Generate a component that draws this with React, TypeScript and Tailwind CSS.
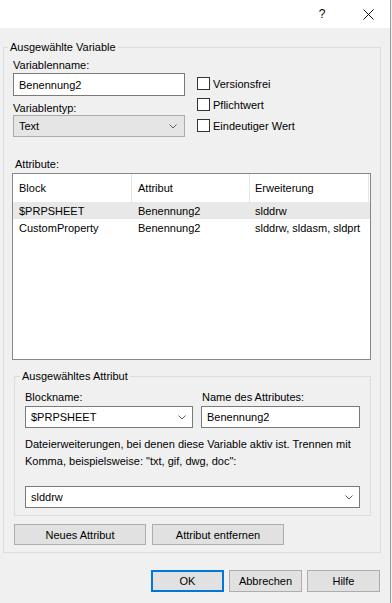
const font = { fontFamily: '"Liberation Sans", Arial, sans-serif' };

const Chevron = () => (
  <svg width="8" height="5" viewBox="0 0 8 5" className="shrink-0">
    <polyline points="0.5,0.5 4,4 7.5,0.5" fill="none" stroke="#606060" strokeWidth="1" />
  </svg>
);

const Checkbox = ({ label }: { label: string }) => (
  <div className="flex h-[21px] items-center gap-[3px]">
    <div className="h-[13px] w-[13px] border border-[#333333] bg-white" />
    <span>{label}</span>
  </div>
);

const rows = [
  { block: "$PRPSHEET", attr: "Benennung2", ext: "slddrw", selected: true },
  { block: "CustomProperty", attr: "Benennung2", ext: "slddrw, sldasm, sldprt", selected: false },
];

export default function App() {
  return (
    <div className="flex h-[603px] w-[392px] bg-[#f0f0f0] text-[11px] leading-[14px] text-black" style={font}>
      <div className="flex w-[390px] flex-col">
        {/* title bar */}
        <div className="flex h-[28px] items-center justify-end bg-white">
          <div className="flex w-[50px] justify-center text-[12px]">?</div>
          <div className="flex w-[43px] justify-center">
            <svg width="11" height="11" viewBox="0 0 11 11">
              <path d="M0.5 0.5 L10.5 10.5 M10.5 0.5 L0.5 10.5" stroke="#111" strokeWidth="1" />
            </svg>
          </div>
        </div>

        {/* Ausgewählte Variable */}
        <fieldset className="ml-[3px] mt-[11px] w-[378px] border border-[#dcdcdc] pb-[7px] pl-[8px] pr-[9px] pt-[3px]">
          <legend className="-ml-[4px] px-[2px] leading-[16px]">Ausgewählte Variable</legend>

          <div className="flex">
            <div className="ml-[1px] flex w-[172px] flex-col">
              <span>Variablenname:</span>
              <div className="mt-[1px] flex h-[23px] items-center border border-[#7a7a7a] bg-white px-[5px]">Benennung2</div>
              <span className="mt-[5px]">Variablentyp:</span>
              <div className="flex h-[22px] items-center justify-between border border-[#acacac] bg-[#e5e5e5] pl-[5px] pr-[7px]">
                <span>Text</span>
                <Chevron />
              </div>
            </div>
            <div className="ml-[12px] mt-[15px] flex flex-col">
              <Checkbox label="Versionsfrei" />
              <Checkbox label="Pflichtwert" />
              <Checkbox label="Eindeutiger Wert" />
            </div>
          </div>

          <div className="ml-[3px] mt-[20px]">Attribute:</div>
          <div className="mt-[2px] h-[187px] w-[359px] border border-[#828790] bg-white">
            <div className="flex h-[28px]">
              <div className="flex w-[119px] items-center border-r border-[#e5e5e5] pl-[6px]">Block</div>
              <div className="flex w-[118px] items-center border-r border-[#e5e5e5] pl-[6px]">Attribut</div>
              <div className="flex w-[119px] items-center border-r border-[#e5e5e5] pl-[5px]">Erweiterung</div>
            </div>
            {rows.map((r) => (
              <div key={r.block} className={`flex h-[17px] items-center ${r.selected ? "bg-[#e8e8e8]" : ""}`}>
                <div className="w-[119px] pl-[6px]">{r.block}</div>
                <div className="w-[118px] pl-[6px]">{r.attr}</div>
                <div className="pl-[5px]">{r.ext}</div>
              </div>
            ))}
          </div>

          {/* Ausgewähltes Attribut */}
          <fieldset className="ml-[2px] mt-[8px] w-[357px] border border-[#dcdcdc] pb-[7px] pl-[10px] pr-[9px] pt-[6px]">
            <legend className="-ml-[5px] px-[2px] leading-[16px]">Ausgewähltes Attribut</legend>
            <div className="flex gap-[8px]">
              <div className="flex w-[168px] flex-col">
                <span>Blockname:</span>
                <div className="mt-[2px] flex h-[22px] items-center justify-between border border-[#7a7a7a] bg-white pl-[5px] pr-[6px]">
                  <span>$PRPSHEET</span>
                  <Chevron />
                </div>
              </div>
              <div className="flex w-[159px] flex-col">
                <span className="pl-[1px]">Name des Attributes:</span>
                <div className="mt-[2px] flex h-[22px] items-center border border-[#7a7a7a] bg-white px-[5px]">Benennung2</div>
              </div>
            </div>
            <p className="mt-[8px] leading-[17px]">
              Dateierweiterungen, bei denen diese Variable aktiv ist. Trennen mit Komma, beispielsweise: "txt, gif, dwg, doc":
            </p>
            <div className="mt-[16px] flex h-[22px] w-[335px] items-center justify-between border border-[#7a7a7a] bg-white pl-[5px] pr-[6px]">
              <span>slddrw</span>
              <Chevron />
            </div>
          </fieldset>

          <div className="ml-[2px] mt-[8px] flex gap-[6px]">
            <button className="h-[21px] w-[132px] border border-[#adadad] bg-[#e1e1e1]">Neues Attribut</button>
            <button className="h-[21px] w-[132px] border border-[#adadad] bg-[#e1e1e1]">Attribut entfernen</button>
          </div>
        </fieldset>

        {/* dialog buttons */}
        <div className="mt-[17px] flex justify-end gap-[5px] pr-[10px]">
          <button className="h-[22px] w-[73px] border-2 border-[#0078d7] bg-[#e1e1e1]">OK</button>
          <button className="h-[22px] w-[73px] border border-[#adadad] bg-[#e1e1e1]">Abbrechen</button>
          <button className="h-[22px] w-[73px] border border-[#adadad] bg-[#e1e1e1]">Hilfe</button>
        </div>
      </div>
      <div className="w-px bg-[#9a9a9a]" />
    </div>
  );
}
